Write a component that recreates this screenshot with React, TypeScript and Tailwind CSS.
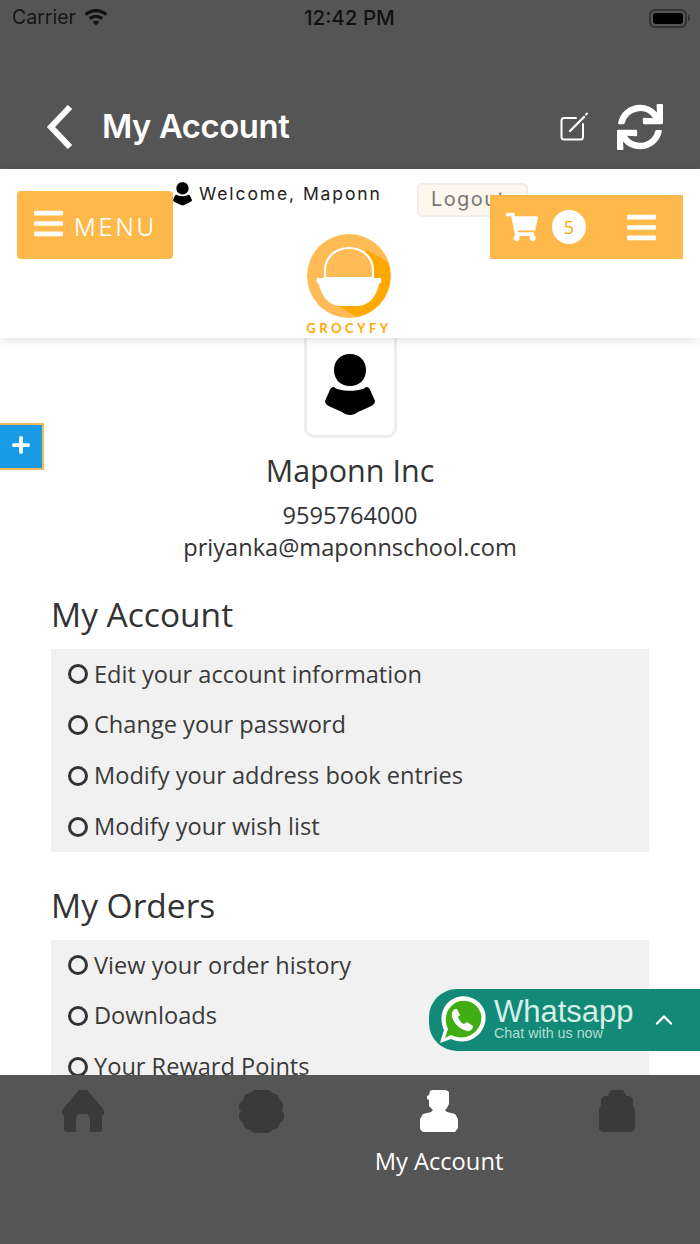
import { ChevronUp } from 'lucide-react';
import { FaBars, FaShoppingCart, FaPlus, FaSync } from 'react-icons/fa';

const PersonIcon = ({ className }: { className: string }) => (
    <svg viewBox="0 0 50 62" className={className} fill="currentColor">
        <path d="M25 0 C35 0 41 7 41 16 C41 25 35 32 25 32 C15 32 9 25 9 16 C9 7 15 0 25 0 Z" />
        <path d="M9 33 C14 38 36 38 41 33 C44 33 45 35 46 38 L50 47 C50 50 47 52 42 54 L33 58 C28 62 22 62 17 58 L8 54 C3 52 0 50 0 47 L4 38 C5 35 6 33 9 33 Z" />
    </svg>
);

const TabHome = () => (
    <svg viewBox="0 0 42 42" className="w-[42px] h-[42px]" fill="#3a3a3a">
        <path d="M17 0 H25 L42 20 V24 L40 26 V40 L38 42 H28 V30 Q28 26 25 24 H17 Q14 26 14 30 V42 H4 L2 40 V26 L0 24 V20 Z" />
    </svg>
);

const TabBadge = () => (
    <svg viewBox="0 0 45 43" className="w-[45px] h-[43px]" fill="#3a3a3a">
        <path d="M15 0 H30 L34 3 L39 5 L41 10 L44 14 V19 L43 21 L45 24 V29 L41 33 L39 38 L34 40 L30 43 H15 L11 40 L6 38 L4 33 L0 29 V24 L2 21 L0 19 V14 L4 10 L6 5 L11 3 Z" />
    </svg>
);

const TabPerson = () => (
    <svg viewBox="0 0 40 42" className="w-10 h-[42px]" fill="#ffffff">
        <path d="M11 1 L13 0 H27 L30 2 V14 L28 18 L26 20 L28 22 L36 24 L39 29 V38 L36 42 H4 L1 39 V29 L4 24 L12 22 L14 20 L10 16 V10 L8 9 V6 L10 5 Z" />
    </svg>
);

const TabBag = () => (
    <svg viewBox="0 0 36 42" className="w-9 h-[42px]" fill="#3a3a3a">
        <path d="M9 6 L12 0 H24 L27 6 H31 L34 9 V16 L36 19 V39 L33 42 H3 L0 39 V19 L2 16 V9 L5 6 Z" />
    </svg>
);

const LogoMark = () => (
    <svg viewBox="0 0 84 84" className="w-[84px] h-[84px]">
        <circle cx="42" cy="42" r="42" fill="#ffbb55" />
        <path d="M60 16 L81 28 A42 42 0 0 1 50 83 L28 70 Z" fill="#ffa800" />
        <path d="M18 44 V36 C18 23 29 14 42 14 C55 14 66 23 66 36 V44 Z" fill="#ffbb55" stroke="#ffffff" strokeWidth="2.2" />
        <path d="M11 44 H73 C75 44 75 49 72 50 C70 61 63 72 50 72 H34 C21 72 14 61 12 50 C9 49 9 44 11 44 Z" fill="#ffffff" />
    </svg>
);

const WhatsappLogo = () => (
    <svg viewBox="0 0 50 50" className="w-[50px] h-[50px]">
        <path d="M3 48 L7 35 C1 22 6 8 18 3 C31 -2 44 5 48 17 C51 30 43 43 30 46 C23 47 18 46 14 44 Z" fill="#ffffff" />
        <path d="M8 43 L11 34 C6 23 10 12 20 7 C31 3 41 9 44 19 C46 29 40 39 29 42 C23 43 18 42 14 40 Z" fill="#3fae14" />
        <path d="M18 14 C16 15 14 18 15 22 C17 29 23 34 30 36 C33 37 36 34 36 31 L30 27 L27 29 C24 28 22 25 21 22 L23 20 L20 14 Z" fill="#ffffff" />
    </svg>
);

const accountLinks = [
    'Edit your account information',
    'Change your password',
    'Modify your address book entries',
    'Modify your wish list',
];
const orderLinks = ['View your order history', 'Downloads', 'Your Reward Points'];

const LinkRow = ({ label }: { label: string }) => (
    <li className="h-[50.75px] flex items-center pl-[17px] text-[23.6px] text-[#3a3a3a]">
        <span className="w-5 h-5 rounded-full border-[3.5px] border-[#333] mr-[6px] shrink-0" />
        {label}
    </li>
);

export default function App() {
    return (
        <div className="relative w-[700px] h-[1244px] overflow-hidden bg-white flex flex-col font-['Open_Sans',sans-serif]">
            {/* Nav header */}
            <header className="h-[169px] bg-[#555555] shrink-0 flex flex-col font-['Inter',sans-serif]">
                <div className="h-[36px] flex items-center justify-between pl-3 pr-[10px] text-[#111] relative">
                    <div className="flex items-center gap-[7px]">
                        <span className="text-[19.5px] text-[#151515]">Carrier</span>
                        <svg viewBox="0 0 26 20" className="w-[26px] h-5" fill="#111">
                            <path d="M13 17.5 L9.8 14 C11.6 12.4 14.4 12.4 16.2 14 Z" />
                            <path d="M7.9 12 L5.7 9.7 C9.8 5.9 16.2 5.9 20.3 9.7 L18.1 12 C15.2 9.4 10.8 9.4 7.9 12 Z" />
                            <path d="M3.8 7.8 L1.5 5.4 C7.9 -0.6 18.1 -0.6 24.5 5.4 L22.2 7.8 C17 3 9 3 3.8 7.8 Z" />
                        </svg>
                    </div>
                    <span className="absolute left-[304px] text-[20.5px] font-medium">12:42 PM</span>
                    <div className="flex items-center gap-px">
                        <div className="w-[38px] h-[19px] rounded-[6px] border-2 border-[#333] p-[2px]">
                            <div className="w-full h-full bg-black rounded-[3px]" />
                        </div>
                        <div className="w-[2px] h-[6px] bg-[#333] rounded-r" />
                    </div>
                </div>
                <div className="flex items-center h-[64px] mt-[59px] pr-[37px]">
                    <svg viewBox="0 0 28 44" className="w-7 h-11 ml-[46px]" fill="none" stroke="#ffffff" strokeWidth="6">
                        <path d="M24 2 L5 22 L24 42" />
                    </svg>
                    <h1 className="ml-[28px] text-[32.8px] font-semibold text-white tracking-[-0.4px]">My Account</h1>
                    <svg viewBox="0 0 30 30" className="w-[30px] h-[30px] ml-auto" fill="none" stroke="#ffffff" strokeWidth="2" strokeLinecap="round" strokeLinejoin="round">
                        <path d="M17 6 H5 C3.5 6 2.5 7 2.5 8.5 V25 C2.5 26.5 3.5 27.5 5 27.5 H21.5 C23 27.5 24 26.5 24 25 V12" />
                        <path d="M11 19 L25 5" strokeWidth="2.4" />
                        <path d="M27 2.5 L28 1.5" />
                    </svg>
                    <FaSync className="w-[46px] h-[46px] ml-[28px] text-white" />
                </div>
            </header>

            {/* Site header */}
            <section className="relative z-10 h-[169px] bg-white shrink-0 shadow-[0_2px_10px_rgba(0,0,0,0.12)] flex items-start">
                <button className="mt-[22px] ml-[17px] w-[156px] h-[68px] rounded-[4px] bg-[#ffb94a] flex items-center text-white shrink-0 font-['Inter',sans-serif]">
                    <FaBars className="w-[33px] h-[33px] ml-[15px] -mt-[3px]" />
                    <span className="ml-[9px] mt-[5px] text-[24px] font-light tracking-[2.8px]">MENU</span>
                </button>
                <div className="mt-[12px] flex items-center shrink-0 font-['Inter',sans-serif]">
                    <PersonIcon className="w-[19px] h-[24px] text-black" />
                    <span className="ml-[7px] text-[17.5px] tracking-[1.9px] text-[#222]">Welcome, Maponn</span>
                </div>
                <div className="absolute left-[417px] top-[14px] w-[111px] h-[34px] rounded-[5px] border-2 border-[#f0eeea] bg-[#fdf7ee] pl-3 text-[20px] leading-[28px] tracking-[1.4px] text-[#777] font-['Inter',sans-serif]">
                    Logout
                </div>
                <div className="absolute left-[490px] top-[26px] w-[193px] h-[64px] bg-[#ffb94a] flex items-center text-white">
                    <FaShoppingCart className="w-8 h-8 ml-4" />
                    <span className="ml-[14px] w-[34px] h-[34px] rounded-full bg-white text-[#ffa800] text-[18px] flex items-center justify-center">5</span>
                    <FaBars className="w-[33px] h-[33px] ml-[39px]" />
                </div>
                <div className="absolute left-[307px] top-[65px] flex flex-col items-center w-[84px]">
                    <LogoMark />
                    <span className="mt-[2px] text-[13px] leading-[16px] font-bold tracking-[3.5px] text-[#ffa800] whitespace-nowrap font-['Lato',sans-serif]">GROCYFY</span>
                </div>
            </section>

            {/* Account content */}
            <main className="flex-1 min-h-0 overflow-hidden flex flex-col px-[51px]">
                <div className="self-center w-[93px] h-[100px] shrink-0 border-[3px] border-t-0 border-[#eeeeee] rounded-b-[10px] flex items-center justify-center pb-[3px]">
                    <PersonIcon className="w-[50px] h-[62px] text-black" />
                </div>
                <div className="flex flex-col items-center text-[#333]">
                    <h2 className="mt-[11px] text-[30.5px] leading-[42px]">Maponn Inc</h2>
                    <p className="mt-[8px] text-[23.6px] leading-[32px]">9595764000</p>
                    <p className="text-[23.6px] leading-[32px]">priyanka@maponnschool.com</p>
                </div>
                <h3 className="mt-[26px] text-[33.5px] leading-[50px] text-[#333]">My Account</h3>
                <ul className="mt-[10px] bg-[#f1f1f1]">
                    {accountLinks.map((label) => (
                        <LinkRow key={label} label={label} />
                    ))}
                </ul>
                <h3 className="mt-[28px] text-[33.5px] leading-[50px] text-[#333]">My Orders</h3>
                <ul className="mt-[10px] bg-[#f1f1f1] shrink-0">
                    {orderLinks.map((label) => (
                        <LinkRow key={label} label={label} />
                    ))}
                </ul>
            </main>

            {/* Tab bar */}
            <nav className="h-[169px] bg-[#555555] shrink-0 flex -mx-[6px] w-[712px]">
                <div className="w-[178px] flex flex-col items-center pt-[15px]">
                    <TabHome />
                </div>
                <div className="w-[178px] flex flex-col items-center pt-[15px]">
                    <TabBadge />
                </div>
                <div className="w-[178px] flex flex-col items-center pt-[15px]">
                    <TabPerson />
                    <span className="mt-[13px] text-[23.7px] leading-[32px] text-white">My Account</span>
                </div>
                <div className="w-[178px] flex flex-col items-center pt-[15px]">
                    <TabBag />
                </div>
            </nav>

            {/* Floating plus tab */}
            <button className="absolute left-0 top-[423px] w-[44px] h-[47px] bg-[#1a9be6] border-2 border-l-0 border-[#f6b95a] flex items-center justify-center text-white z-20">
                <FaPlus className="w-[20px] h-[20px] -mt-[3px]" />
            </button>

            {/* Whatsapp widget */}
            <div className="absolute left-[429px] top-[989px] w-[271px] h-[62px] rounded-l-[28px] bg-[#128a77] flex items-center text-white z-20">
                <div className="ml-[8px]">
                    <WhatsappLogo />
                </div>
                <div className="ml-[7px] -mt-[2px] flex flex-col font-['Liberation_Sans',sans-serif] text-[#d6efe9]">
                    <span className="text-[31px] leading-[28px]">Whatsapp</span>
                    <span className="text-[14.3px] leading-[14px] text-[#b5ddd3]">Chat with us now</span>
                </div>
                <ChevronUp className="w-7 h-7 ml-[16px] text-white" strokeWidth={2} />
            </div>
        </div>
    );
}
